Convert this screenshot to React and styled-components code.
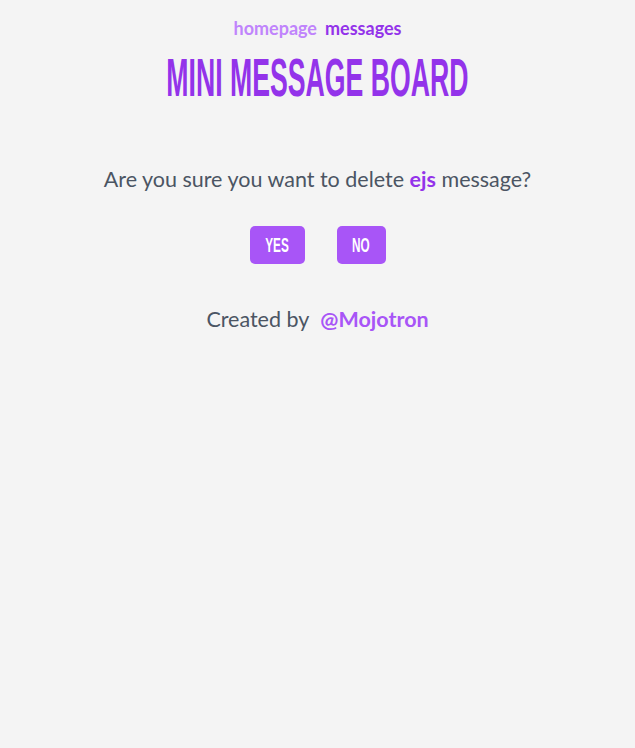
import React from "react";
import styled, { createGlobalStyle } from "styled-components";

const Global = createGlobalStyle`
  html, body { margin: 0; padding: 0; background: #f4f4f4; }
  body { font-family: "Lato", "Open Sans", sans-serif; color: #4b5563; }
`;

const Page = styled.div`
  display: flex;
  flex-direction: column;
  align-items: center;
  padding-top: 17px;
`;

const Nav = styled.nav`
  display: flex;
  gap: 8px;
  font-size: 18px;
  font-weight: 700;
`;

const NavLink = styled.a`
  color: ${(p) => (p.$active ? "#9333ea" : "#c084fc")};
  text-decoration: none;
`;

const Title = styled.h1`
  margin: 11px 0 0;
  font-family: "Liberation Sans", sans-serif;
  font-weight: 700;
  font-size: 53px;
  line-height: 56px;
  color: #9333ea;
  white-space: nowrap;
  transform: scaleX(0.503);
`;

const Question = styled.p`
  margin: 60px 0 0;
  font-size: 21.5px;
  color: #4b5563;
`;

const Strong = styled.strong`
  color: #9333ea;
  font-weight: 700;
`;

const Buttons = styled.div`
  display: flex;
  gap: 32px;
  margin-top: 34px;
`;

const Button = styled.button`
  width: ${(p) => p.$w}px;
  height: 38px;
  border: none;
  border-radius: 5px;
  background: #a855f7;
  color: #fff;
  font-family: "Liberation Sans", sans-serif;
  font-weight: 700;
  font-size: 21px;
  display: flex;
  align-items: center;
  justify-content: center;
  padding: 0;
  cursor: pointer;
`;

const BtnText = styled.span`
  display: inline-block;
  transform: scaleX(0.56);
`;

const Footer = styled.p`
  margin: 42px 0 0;
  font-size: 21.5px;
  color: #4b5563;
  display: flex;
  gap: 11px;
`;

const Author = styled.a`
  color: #a855f7;
  font-weight: 700;
  text-decoration: none;
`;

export default function App() {
  return (
    <>
      <Global />
      <Page>
        <Nav>
          <NavLink href="#">homepage</NavLink>
          <NavLink href="#" $active>messages</NavLink>
        </Nav>
        <Title>MINI MESSAGE BOARD</Title>
        <Question>
          Are you sure you want to delete <Strong>ejs</Strong> message?
        </Question>
        <Buttons>
          <Button $w={55}><BtnText>YES</BtnText></Button>
          <Button $w={49}><BtnText>NO</BtnText></Button>
        </Buttons>
        <Footer>
          <span>Created by</span>
          <Author href="#">@Mojotron</Author>
        </Footer>
      </Page>
    </>
  );
}
